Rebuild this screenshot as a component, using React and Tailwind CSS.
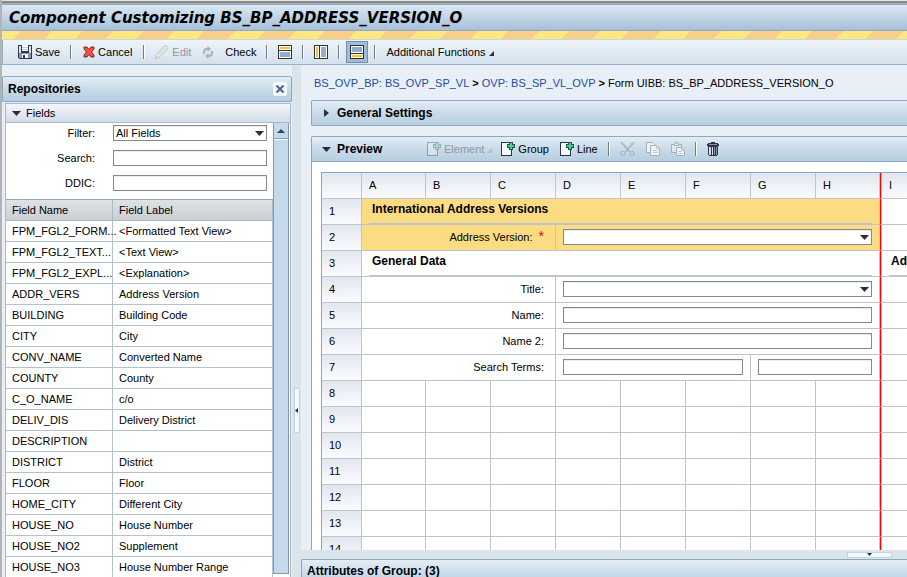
import React from "react";

const FIELDS = [
  ["FPM_FGL2_FORM...", "<Formatted Text View>"],
  ["FPM_FGL2_TEXT...", "<Text View>"],
  ["FPM_FGL2_EXPL...", "<Explanation>"],
  ["ADDR_VERS", "Address Version"],
  ["BUILDING", "Building Code"],
  ["CITY", "City"],
  ["CONV_NAME", "Converted Name"],
  ["COUNTY", "County"],
  ["C_O_NAME", "c/o"],
  ["DELIV_DIS", "Delivery District"],
  ["DESCRIPTION", ""],
  ["DISTRICT", "District"],
  ["FLOOR", "Floor"],
  ["HOME_CITY", "Different City"],
  ["HOUSE_NO", "House Number"],
  ["HOUSE_NO2", "Supplement"],
  ["HOUSE_NO3", "House Number Range"],
];

const COLUMNS = ["A", "B", "C", "D", "E", "F", "G", "H", "I"];
const EMPTY_ROWS = [8, 9, 10, 11, 12, 13, 14];

const INPUT =
  "block h-4 w-full appearance-none rounded-none border border-[#84888f] bg-white px-[2px] text-[11px] leading-[14px] text-black shadow-[inset_0_1px_1px_#e8eaee] outline-none";
const HEAD_BG = "bg-linear-to-b from-[#e3edf5] via-[#c9dbe8] to-[#b7cee0]";
const CELL = "h-[26px] border-b border-[#bfc4cc] p-0 pb-px";
const MARKER = "border-l border-l-[#ff0000] shadow-[inset_1px_0_#bfc4cc]";

function Sep() {
  return <span className="mx-[10px] h-[14px] w-[2px] border-r border-l border-r-white border-l-[#6d7b94]" />;
}

function SaveIcon() {
  return (
    <svg width="14" height="14" viewBox="0 0 14 14" aria-hidden="true" shapeRendering="crispEdges">
      <path d="M0 0h14v14H1l-1-1z" fill="#33344f" />
      <path d="M1 1h2v7H1z M11 1h2v7h-2z" fill="#dbe4ef" />
      <path d="M3 0h8v7H3z" fill="#33344f" />
      <path d="M4 0h6v6H4z" fill="#f8fafc" />
      <path d="M4 2h6v1H4z M4 4h6v1H4z" fill="#c6ccd6" />
      <path d="M1 8h12v5H1z" fill="#8798b5" />
      <path d="M4 9h6v4H4z" fill="#fff" />
      <path d="M5 10h2v3H5z" fill="#33344f" />
    </svg>
  );
}

function CancelIcon() {
  return (
    <svg width="12" height="12" viewBox="0 0 12 12" aria-hidden="true">
      <path d="M1 1h3l2 2.500 2-2.500h3v2L8.500 6 11 9v2H8L6 8.500 4 11H1V9l2.500-3L1 3z" fill="#f4503c" stroke="#7c2b2b" />
    </svg>
  );
}

function PencilIcon() {
  return (
    <svg width="14" height="14" viewBox="0 0 14 14" aria-hidden="true">
      <path d="M.5 13.500l1-4 8-8.500q2-1 3.500 1.500l-.5 1.500-8 8z" fill="#f4f5f4" stroke="#b3bac1" />
      <path d="M3 9l7-7 1.500 1-7.500 8z" fill="#cfdfd0" />
      <path d="M.5 13.500l1-4 1 2 1.500.5z" fill="#e6c7bd" />
    </svg>
  );
}

function RefreshIcon() {
  return (
    <svg width="12" height="13" viewBox="0 0 12 13" fill="none" stroke="#aab1b9" strokeWidth="2" aria-hidden="true">
      <path d="M2 8V6q0-3 3-3h1" />
      <path d="M5.500 0v6L9 3z" fill="#aab1b9" stroke="none" />
      <path d="M10 5v2q0 3-3 3H6" />
      <path d="M6.500 13V7L3 10z" fill="#aab1b9" stroke="none" />
    </svg>
  );
}

function LayoutIcon({ kind }) {
  return (
    <svg width="14" height="14" viewBox="0 0 14 14" aria-hidden="true" shapeRendering="crispEdges">
      <rect width="14" height="14" fill="#33302f" />
      <rect x="1" y="1" width="12" height="12" fill="#fff" />
      {kind === "top" && (
        <>
          <path d="M2 2h10v2H2z" fill="#fdbf2d" />
          <path d="M1 5h12v1H1z" fill="#33302f" />
          <path d="M2 7h10v5H2z" fill="#8fafd0" />
        </>
      )}
      {kind === "left" && (
        <>
          <path d="M2 2h2v10H2z" fill="#fdbf2d" />
          <path d="M5 1h1v12H5z" fill="#33302f" />
          <path d="M7 2h5v10H7z" fill="#8fafd0" />
        </>
      )}
      {kind === "bottom" && (
        <>
          <path d="M2 2h10v5H2z" fill="#8fafd0" />
          <path d="M1 8h12v1H1z" fill="#33302f" />
          <path d="M2 10h10v2H2z" fill="#fdbf2d" />
        </>
      )}
    </svg>
  );
}

function AddPageIcon() {
  return (
    <svg width="14" height="14" viewBox="0 0 14 14" aria-hidden="true" shapeRendering="crispEdges">
      <path d="M0 0h8v1H1v12h9V8h1v6H0z" fill="#2f304a" />
      <path d="M1 1h7v6h2v6H1z" fill="#f7f9fc" />
      <path d="M8 0h4v2h2v4h-2v2H8V6H6V2h2z" fill="#1f5547" />
      <path d="M9 1h2v2h2v2h-2v2H9V5H7V3h2z" fill="#4cc99b" />
    </svg>
  );
}

function CutIcon() {
  return (
    <svg width="15" height="14" viewBox="0 0 15 14" fill="none" stroke="#a3abb5" aria-hidden="true">
      <path d="M1 1l8.500 9L2.500.5zM14 1L5.500 10l7-9.500z" fill="#edf1f5" />
      <rect x="1" y="9.500" width="4" height="4" rx="1.500" />
      <rect x="10" y="9.500" width="4" height="4" rx="1.500" />
    </svg>
  );
}

function CopyIcon() {
  return (
    <svg width="14" height="14" viewBox="0 0 14 14" fill="#f0f4f8" stroke="#a6aeb8" aria-hidden="true">
      <path d="M.5.5h6l2 2v8h-8z" />
      <path d="M4.500 3.500h6l3 3v7h-9z" />
      <path d="M10.500 3.500v3h3M6.500 8.500h5M6.500 10.500h5" fill="none" stroke="#c3cad2" />
    </svg>
  );
}

function PasteIcon() {
  return (
    <svg width="14" height="14" viewBox="0 0 14 14" fill="#dfe6ed" stroke="#a6aeb8" aria-hidden="true">
      <path d="M.5 2.500h10v8H.5z" />
      <path d="M3.500 3.500v-2h1v-1h2v1h1v2z" />
      <path d="M5.500 5.500h5l3 3v5h-8z" fill="#f2f5f8" />
      <path d="M10.500 5.500v3h3M7.500 9.500h3M7.500 11.500h4" fill="none" stroke="#bcc4cd" />
    </svg>
  );
}

function TrashIcon() {
  return (
    <svg width="12" height="14" viewBox="0 0 12 14" aria-hidden="true" shapeRendering="crispEdges">
      <path d="M4 0h4v1h3v1h1v2H0V2h1V1h3z" fill="#2f304a" />
      <path d="M2 2h8v1H2z" fill="#8b93a6" />
      <path d="M1 4h10v9h-1v1H2v-1H1z" fill="#2f304a" />
      <path d="M2 5h2v8H2z M5 5h1v8H5z" fill="#d5dae3" />
      <path d="M7 5h1v8H7z M9 5h1v8H9z" fill="#8b93a6" />
    </svg>
  );
}

function Down({ className = "" }) {
  return (
    <svg width="9" height="5" viewBox="0 0 9 5" aria-hidden="true" className={className}>
      <path d="M0 0h9L4.500 5z" fill="#2b2c40" />
    </svg>
  );
}

function Corner({ color }) {
  return (
    <svg width="5" height="5" viewBox="0 0 5 5" aria-hidden="true" className="mt-[3px]">
      <path d="M5 0v5H0z" fill={color} />
    </svg>
  );
}

function Select({ label, id, value }) {
  return (
    <div className="relative">
      <select id={id} aria-label={label} className={INPUT} defaultValue={value}>
        <option>{value}</option>
      </select>
      <Down className="pointer-events-none absolute top-[6px] right-[3px]" />
    </div>
  );
}

function RowHead({ n }) {
  return (
    <th
      scope="row"
      className="h-[26px] border-r border-b border-l border-[#bfc4cc] border-l-[#8ba6c4] bg-linear-to-b from-[#e1e6ef] to-[#fbfcfe] p-0 pb-px pl-[7px] text-left font-normal"
    >
      {n}
    </th>
  );
}

function Rest() {
  return <td className={`${CELL} ${MARKER}`} />;
}

function GroupTitle({ children }) {
  return (
    <div className="mr-[7px] ml-[7px] flex h-[25px] items-start border-b border-[#b5c6d2] pt-[3px] pl-[3px] text-[12px] leading-[14px] font-bold whitespace-nowrap">
      {children}
    </div>
  );
}

function FieldRow({ n, label, required, children, shade = "" }) {
  return (
    <tr>
      <RowHead n={n} />
      <td colSpan={3} className={`${CELL} border-r pr-[11px] text-right ${shade}`}>
        <label htmlFor={`cell-${n}`}>{label}</label>
        {required && <span className="ml-[6px] text-[14px] leading-3 text-[#e2001a]">*</span>}
      </td>
      {children}
      <Rest />
    </tr>
  );
}

function PreviewGrid() {
  return (
    <table className="w-full table-fixed border-separate border-spacing-0 border-t border-[#8ba6c4]">
      <colgroup>
        <col className="w-[41px]" />
        <col className="w-[64px]" />
        {COLUMNS.slice(1, 7).map((c) => (
          <col key={c} className="w-[65px]" />
        ))}
        <col className="w-[64px]" />
        <col />
      </colgroup>
      <thead>
        <tr>
          <th className="h-[26px] border-r border-b border-l border-[#bfc4cc] border-l-[#8ba6c4] bg-linear-to-b from-[#e1e6ef] to-[#fbfcfe]" />
          {COLUMNS.map((c) => (
            <th
              key={c}
              scope="col"
              className={`border-b border-[#bfc4cc] bg-linear-to-b from-[#e1e6ef] to-[#fbfcfe] p-0 pb-px text-left font-normal ${
                c === "I" ? `pl-[8px] ${MARKER}` : "border-r pl-[7px]"
              }`}
            >
              {c}
            </th>
          ))}
        </tr>
      </thead>
      <tbody>
        <tr>
          <RowHead n={1} />
          <td colSpan={8} className="h-[26px] border-r border-b border-[#bfc4cc] bg-[#fcdc82] p-0 align-top">
            <GroupTitle>International Address Versions</GroupTitle>
          </td>
          <Rest />
        </tr>
        <FieldRow n={2} label="Address Version:" required shade="bg-[#fcdc82]">
          <td colSpan={5} className={`${CELL} border-r bg-[#fcdc82] pr-[7px] pl-[7px]`}>
            <Select id="cell-2" value="" label="Address Version" />
          </td>
        </FieldRow>
        <tr>
          <RowHead n={3} />
          <td colSpan={8} className="h-[26px] border-r border-b border-[#bfc4cc] p-0 align-top">
            <GroupTitle>General Data</GroupTitle>
          </td>
          <td className={`h-[26px] border-b border-[#bfc4cc] p-0 align-top ${MARKER}`}>
            <div className="ml-[8px] h-[25px] border-b border-[#b5c6d2] pt-[3px] pl-[2px] text-[12px] leading-[14px] font-bold">Ad</div>
          </td>
        </tr>
        <FieldRow n={4} label="Title:">
          <td colSpan={5} className={`${CELL} border-r pr-[7px] pl-[7px]`}>
            <Select id="cell-4" value="" label="Title" />
          </td>
        </FieldRow>
        <FieldRow n={5} label="Name:">
          <td colSpan={5} className={`${CELL} border-r pr-[7px] pl-[7px]`}>
            <input id="cell-5" type="text" className={INPUT} />
          </td>
        </FieldRow>
        <FieldRow n={6} label="Name 2:">
          <td colSpan={5} className={`${CELL} border-r pr-[7px] pl-[7px]`}>
            <input id="cell-6" type="text" className={INPUT} />
          </td>
        </FieldRow>
        <FieldRow n={7} label="Search Terms:">
          <td colSpan={3} className={`${CELL} border-r pr-[7px] pl-[7px]`}>
            <input id="cell-7" type="text" className={INPUT} />
          </td>
          <td colSpan={2} className={`${CELL} border-r pr-[7px] pl-[7px]`}>
            <input type="text" aria-label="Search Terms, second" className={INPUT} />
          </td>
        </FieldRow>
        {EMPTY_ROWS.map((n) => (
          <tr key={n}>
            <RowHead n={n} />
            {COLUMNS.map((c) => (
              <td key={c} className={`${CELL} ${c === "I" ? MARKER : "border-r"}`} />
            ))}
          </tr>
        ))}
      </tbody>
    </table>
  );
}

function Repositories() {
  return (
    <aside className="flex w-[290px] shrink-0 flex-col pt-[11px]">
      <header className={`flex h-[26px] shrink-0 items-center justify-between rounded-t-xs border border-[#8aa8c8] pr-1 pl-[5px] ${HEAD_BG}`}>
        <h2 className="text-[12px] font-bold">Repositories</h2>
        <button type="button" aria-label="Close" className="flex size-[14px] items-center justify-center rounded-xs bg-[#f1f6fa]">
          <svg width="8" height="8" viewBox="0 0 8 8" stroke="#47658a" strokeWidth="2" aria-hidden="true">
            <path d="M.5.5l7 7M7.500.5l-7 7" />
          </svg>
        </button>
      </header>
      <div className="mt-[1px] mr-[1px] ml-[3px] flex min-h-0 flex-1 flex-col border border-b-0 border-[#a9b6cc] bg-white">
        <button type="button" className="flex h-[19px] shrink-0 items-center gap-[5px] border-b border-[#a9b6cc] bg-linear-to-b from-[#f4f7fb] to-[#d3dce8] pl-[6px]">
          <Down />
          Fields
        </button>
        <div className="flex min-h-0 flex-1">
          <div className="min-w-0 flex-1 overflow-hidden">
            <div className="grid grid-cols-[89px_1fr] items-center gap-x-[18px] gap-y-[9px] pt-[2px] pr-[6px] pb-2">
              <label htmlFor="filter" className="text-right">Filter:</label>
              <Select id="filter" value="All Fields" label="Filter" />
              <label htmlFor="search" className="text-right">Search:</label>
              <input id="search" type="text" className={INPUT} />
              <label htmlFor="ddic" className="text-right">DDIC:</label>
              <input id="ddic" type="text" className={INPUT} />
            </div>
            <table className="w-full table-fixed border-separate border-spacing-0 border-t border-[#9ba3ab]">
              <colgroup>
                <col className="w-[107px]" />
                <col />
              </colgroup>
              <thead>
                <tr className="bg-linear-to-b from-[#dfe3e6] to-[#c9cdd0]">
                  <th className="h-[21px] border-r border-b border-[#aab9c9] p-0 pl-[6px] text-left font-normal">Field Name</th>
                  <th className="border-r border-b border-[#aab9c9] p-0 pl-[6px] text-left font-normal">Field Label</th>
                </tr>
              </thead>
              <tbody>
                {FIELDS.map(([name, label]) => (
                  <tr key={name}>
                    <td className="h-[21px] border-r border-b border-[#b4c2d0] p-0 pl-[6px] whitespace-nowrap">{name}</td>
                    <td className="border-r border-b border-[#b4c2d0] p-0 pl-[6px] whitespace-nowrap">{label}</td>
                  </tr>
                ))}
              </tbody>
            </table>
          </div>
          <div className="mr-[1px] mb-[3px] flex w-4 shrink-0 flex-col border-r border-l border-[#8399ae] bg-[#c4daeb]">
            <button type="button" aria-label="Scroll up" className="flex h-4 items-center justify-center border-b border-[#8399ae]">
              <svg width="8" height="4" viewBox="0 0 8 4" aria-hidden="true">
                <path d="M0 4h8L4 0z" fill="#34455f" />
              </svg>
            </button>
            <div className="h-px bg-white" />
            <div className="flex-1 border-b border-[#8399ae]" />
          </div>
        </div>
      </div>
    </aside>
  );
}

function Toolbar() {
  return (
    <div role="toolbar" className="flex h-[25px] shrink-0 items-center border-b border-l border-[#93b3d1] bg-linear-to-b from-[#eff4f9] to-[#d3e1ec] pl-[15px]">
      <button type="button" className="flex items-center gap-[3px]"><SaveIcon />Save</button>
      <Sep />
      <button type="button" className="flex items-center gap-[3px] px-px"><CancelIcon />Cancel</button>
      <Sep />
      <button type="button" disabled className="flex items-center gap-[3px] text-[#8f98a3]"><PencilIcon />Edit</button>
      <button type="button" aria-label="Refresh" disabled className="mx-[11px]"><RefreshIcon /></button>
      <button type="button">Check</button>
      <Sep />
      <button type="button" aria-label="Split top"><LayoutIcon kind="top" /></button>
      <Sep />
      <button type="button" aria-label="Split left"><LayoutIcon kind="left" /></button>
      <Sep />
      <button type="button" aria-label="Split bottom" aria-pressed="true" className="-mx-1 flex size-[22px] items-center justify-center border border-[#6f8fb5] bg-[#a3bcd6]"><LayoutIcon kind="bottom" /></button>
      <Sep />
      <button type="button" className="flex items-center gap-[3px]">Additional Functions<Corner color="#2b2c40" /></button>
    </div>
  );
}

export default function App() {
  return (
    <div className="flex h-screen flex-col overflow-hidden border-l-2 border-[#b3b3b3] bg-[#e8eff6] font-['Liberation_Sans',Arial,sans-serif] text-[11px] leading-[14px] text-black">
      <div className="h-1 shrink-0 border-y border-t-[#e3e6e6] border-b-[#a9aba6] bg-[#85898a]" />
      <header className="flex h-[27px] shrink-0 items-center border-t border-b border-t-[#8aa8c8] border-b-[#8aa8c8] bg-linear-to-b from-[#dce8f1] to-[#a6c0d9] pl-[7px]">
        <h1 className="font-['DejaVu_Sans',Verdana,sans-serif] text-[15px] leading-[18px] font-bold whitespace-nowrap italic">Component Customizing BS_BP_ADDRESS_VERSION_O</h1>
      </header>
      <div className="h-[9px] shrink-0 border-b border-[#c9d6df] bg-[repeating-linear-gradient(135deg,#ffe880_0px,#ffe880_14px,#f9d086_14px,#f9d086_36px,#ffe880_36px,#ffe880_43px)]" />
      <Toolbar />
      <div className="flex min-h-0 flex-1">
        <Repositories />
        <div className="flex w-[9px] shrink-0 items-center justify-center bg-[#dae5ea]">
          <button type="button" aria-label="Collapse panel" className="mt-[178px] flex h-[45px] w-[6px] items-center justify-center border border-[#c3d5e2] bg-[#f4f8fb]">
            <svg width="3" height="5" viewBox="0 0 3 5" aria-hidden="true"><path d="M3 0v5L0 2.500z" fill="#2b2c40" /></svg>
          </button>
        </div>
        <main className="flex min-w-0 flex-1 flex-col">
          <div className="flex min-h-0 flex-1 flex-col overflow-hidden pl-[10px]">
            <nav className="mt-[11px] flex gap-[3px] pl-[3px] whitespace-nowrap">
              <a href="#ovp" className="text-[#1f4ba3]">BS_OVP_BP: BS_OVP_SP_VL</a>
              <span className="font-bold">&gt;</span>
              <a href="#sp" className="text-[#1f4ba3]">OVP: BS_SP_VL_OVP</a>
              <span className="font-bold">&gt;</span>
              <span>Form UIBB: BS_BP_ADDRESS_VERSION_O</span>
            </nav>
            <button type="button" className={`mt-[10px] flex h-[26px] shrink-0 items-center gap-2 rounded-l-xs border border-r-0 border-[#8aa8c8] pl-[12px] text-[12px] font-bold ${HEAD_BG}`}>
              <svg width="5" height="8" viewBox="0 0 5 8" aria-hidden="true"><path d="M0 0v8l5-4z" fill="#2b2c40" /></svg>
              General Settings
            </button>
            <section className="mt-[10px] flex min-h-0 flex-1 flex-col rounded-tl-xs border-t border-l border-[#8aa8c8] bg-white">
              <header className={`flex h-[25px] shrink-0 items-center border-b border-[#8aa8c8] pl-[10px] ${HEAD_BG}`}>
                <button type="button" className="flex w-[105px] items-center gap-[6px] text-[12px] font-bold"><Down />Preview</button>
                <button type="button" disabled className="flex items-center gap-[3px] text-[#8f98a3]"><span className="opacity-35"><AddPageIcon /></span>Element<Corner color="#b9bcc0" /></button>
                <button type="button" className="ml-[9px] flex items-center gap-[3px]"><AddPageIcon />Group</button>
                <button type="button" className="ml-[11px] flex items-center gap-[3px]"><AddPageIcon />Line</button>
                <Sep />
                <button type="button" aria-label="Cut" disabled><CutIcon /></button>
                <button type="button" aria-label="Copy" disabled className="ml-[11px]"><CopyIcon /></button>
                <button type="button" aria-label="Paste" disabled className="ml-[11px]"><PasteIcon /></button>
                <Sep />
                <button type="button" aria-label="Delete"><TrashIcon /></button>
              </header>
              <div className="min-h-0 flex-1 overflow-hidden pt-[10px] pl-[9px]">
                <PreviewGrid />
              </div>
            </section>
          </div>
          <div className="flex h-[9px] shrink-0 items-center justify-end bg-[#dae5ea] pr-[15px]">
            <button type="button" aria-label="Collapse attributes" className="flex h-[6px] w-[45px] items-center justify-center border border-[#c3d5e2] bg-[#f4f8fb]">
              <svg width="5" height="3" viewBox="0 0 5 3" aria-hidden="true"><path d="M0 0h5L2.500 3z" fill="#2b2c40" /></svg>
            </button>
          </div>
          <header className="flex h-[18px] shrink-0 items-end overflow-hidden rounded-tl-xs border-t border-l border-[#8aa8c8] bg-linear-to-b from-[#e3edf5] to-[#c3d8e8] pl-[5px]">
            <h2 className="text-[12px] leading-[12px] font-bold">Attributes of Group: (3)</h2>
          </header>
        </main>
      </div>
    </div>
  );
}
